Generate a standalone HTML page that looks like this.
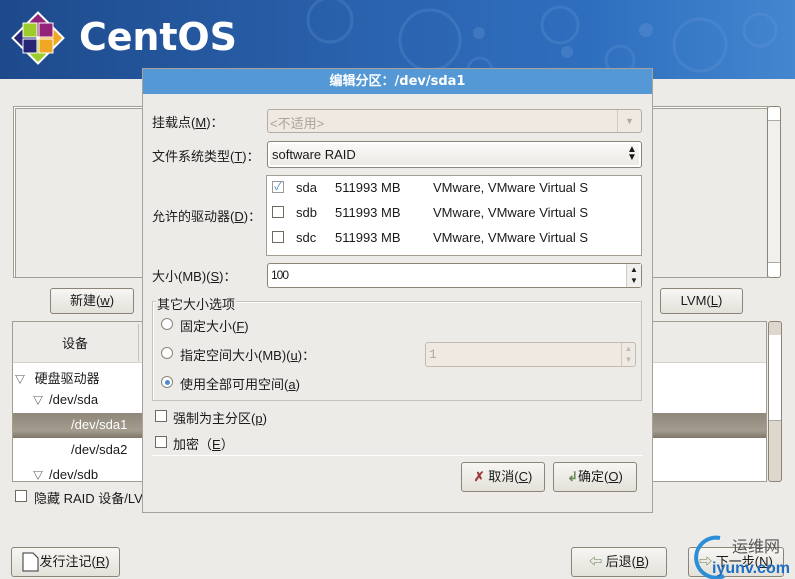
<!DOCTYPE html>
<html><head><meta charset="utf-8">
<style>
*{box-sizing:border-box;margin:0;padding:0}
body{width:795px;height:579px;overflow:hidden;background:#edebe7;font-family:"Liberation Sans","WenQuanYi Zen Hei","Noto Sans CJK SC",sans-serif;font-size:13px;color:#1a1a1a;position:relative}
.a{position:absolute}
.btn{position:absolute;border:1px solid #8c8477;border-radius:3px;background:linear-gradient(#f7f6f3,#e4e1da);text-align:center;font-size:13px}
.cb{position:absolute;width:12px;height:12px;border:1px solid #6f6a62;background:#fff}
.rd{position:absolute;width:12px;height:12px;border:1px solid #8a857c;border-radius:50%;background:#fff}
.lbl{position:absolute;white-space:nowrap}
.tri{font-size:10px;display:inline-block;width:16px}
</style></head><body>
<div class="a" style="left:0;top:0;width:795px;height:79px;background:linear-gradient(90deg,#1e4a8c 0%,#2a62ad 45%,#2f6fbf 75%,#4486cf 100%)"></div>
<svg class="a" style="left:0;top:0" width="795" height="79">
<g fill="none" stroke="#6d9bd6" stroke-opacity=".25" stroke-width="3">
<circle cx="330" cy="20" r="22"/><circle cx="430" cy="40" r="30"/><circle cx="560" cy="25" r="18"/><circle cx="700" cy="45" r="26"/><circle cx="760" cy="30" r="16"/><circle cx="620" cy="60" r="14"/><circle cx="480" cy="70" r="12"/></g>
<g fill="#6d9bd6" fill-opacity=".3"><circle cx="479" cy="33" r="6"/><circle cx="646" cy="30" r="7"/><circle cx="567" cy="52" r="6"/></g>
<g transform="translate(38,38) rotate(45)">
<rect x="-19" y="-19" width="38" height="38" fill="#fff"/>
<rect x="-17" y="-17" width="16" height="16" fill="#932279"/>
<rect x="1" y="-17" width="16" height="16" fill="#efa724"/>
<rect x="-17" y="1" width="16" height="16" fill="#262577"/>
<rect x="1" y="1" width="16" height="16" fill="#9ccd2a"/>
</g>
<g transform="translate(38,38)">
<rect x="-15" y="-15" width="14" height="14" fill="#9ccd2a" stroke="#fff"/>
<rect x="1" y="-15" width="14" height="14" fill="#932279" stroke="#fff"/>
<rect x="-15" y="1" width="14" height="14" fill="#262577" stroke="#fff"/>
<rect x="1" y="1" width="14" height="14" fill="#efa724" stroke="#fff"/>
</g>
<text x="79" y="50" fill="#fff" font-family="DejaVu Sans" font-weight="bold" font-size="38" textLength="158">CentOS</text>
</svg>
<div class="a" style="left:13px;top:106px;width:755px;height:172px;border:1px solid #a39d92;box-shadow:inset 1px 1px 0 #fff, inset 2px 2px 0 #a39d92"></div>
<div class="a" style="left:767px;top:106px;width:14px;height:172px;border:1px solid #8c8477;border-radius:3px;background:#fff"></div>
<div class="a" style="left:768px;top:120px;width:12px;height:143px;background:#f2f0ec;border-top:1px solid #aaa;border-bottom:1px solid #aaa"></div>
<div class="btn" style="left:50px;top:288px;width:84px;height:26px;line-height:24px">新建(<u>w</u>)</div>
<div class="btn" style="left:660px;top:288px;width:83px;height:26px;line-height:24px">LVM(<u>L</u>)</div>
<div class="a" style="left:12px;top:321px;width:755px;height:161px;border:1px solid #a39d92;background:#fff"></div>
<div class="a" style="left:13px;top:322px;width:753px;height:41px;background:#edebe7;border-bottom:1px solid #d6d2ca"></div>
<div class="a" style="left:138px;top:324px;width:1px;height:37px;background:#c8c3ba"></div>
<div class="lbl" style="left:62px;top:333px">设备</div>
<div class="a" style="left:13px;top:413px;width:753px;height:25px;background:linear-gradient(#8f8779,#a39c8f 70%,#7f7869)"></div>
<div class="lbl" style="left:15px;top:368px"><span class="tri">▽</span> 硬盘驱动器</div>
<div class="lbl" style="left:33px;top:392px"><span class="tri">▽</span>/dev/sda</div>
<div class="lbl" style="left:71px;top:417px;color:#fff">/dev/sda1</div>
<div class="lbl" style="left:71px;top:442px">/dev/sda2</div>
<div class="lbl" style="left:33px;top:467px"><span class="tri">▽</span>/dev/sdb</div>
<div class="a" style="left:768px;top:321px;width:14px;height:161px;border:1px solid #8c8477;border-radius:3px;background:#ddd7cd"></div>
<div class="a" style="left:769px;top:335px;width:12px;height:86px;background:#fff;border-bottom:1px solid #aaa"></div>
<div class="cb" style="left:15px;top:490px"></div>
<div class="lbl" style="left:34px;top:488px">隐藏 RAID 设备/LVM</div>
<div class="btn" style="left:11px;top:547px;width:109px;height:30px;line-height:28px">&nbsp;&nbsp;&nbsp;&nbsp;&nbsp;发行注记(<u>R</u>)</div>
<svg class="a" style="left:22px;top:552px" width="18" height="20"><path d="M1 1h10l5 5v13H1z" fill="#fff" stroke="#333"/></svg>
<div class="btn" style="left:571px;top:547px;width:96px;height:30px;line-height:28px"><span style="color:#5d7a4a">⇦</span> 后退(<u>B</u>)</div>
<div class="btn" style="left:688px;top:547px;width:96px;height:30px;line-height:28px"><span style="color:#5d7a4a">⇨</span> 下一步(<u>N</u>)</div>
<svg class="a" style="left:690px;top:530px" width="105" height="49"><path d="M30 8a20 20 0 1 0 4 38" fill="none" stroke="#2c8fd6" stroke-width="4"/><text x="42" y="22" fill="#555" font-size="16" font-family="WenQuanYi Zen Hei">运维网</text><text x="22" y="43" fill="#1e6fc0" font-size="16" font-weight="bold">iyunv.com</text></svg>
<div class="a" style="left:142px;top:68px;width:511px;height:445px;background:#edebe7;border:1px solid #a8a29a"></div>
<div class="a" style="left:143px;top:69px;width:509px;height:25px;background:#5498d5;color:#fff;font-weight:bold;text-align:center;line-height:25px;font-family:'DejaVu Sans','WenQuanYi Zen Hei',sans-serif;font-size:13px">编辑分区：/dev/sda1</div>
<div class="lbl" style="left:152px;top:112px">挂载点(<u>M</u>)：</div>
<div class="a" style="left:267px;top:109px;width:375px;height:24px;border:1px solid #b2aca2;border-radius:3px;background:#efe9e2;color:#aaa39a;padding:3px 2px">&lt;不适用&gt;</div>
<div class="a" style="left:617px;top:110px;width:24px;height:22px;border-left:1px solid #d0cac1;color:#aaa;font-size:9px;text-align:center;line-height:22px">▼</div>
<div class="lbl" style="left:152px;top:146px">文件系统类型(<u>T</u>)：</div>
<div class="a" style="left:267px;top:141px;width:375px;height:27px;border:1px solid #8c8477;border-radius:3px;background:linear-gradient(#fbfaf8,#ece9e3);padding:5px 4px;box-shadow:inset 0 0 0 2px #fff">software RAID</div>
<div class="lbl" style="left:627px;top:146px;font-size:10px;line-height:8px">▲<br>▼</div>
<div class="lbl" style="left:152px;top:206px">允许的驱动器(<u>D</u>)：</div>
<div class="a" style="left:266px;top:175px;width:376px;height:81px;border:1px solid #a39d92;background:#fff"></div>
<div class="cb" style="left:272px;top:181px;border-color:#999;color:#5a8fc4;font-size:11px;line-height:10px;text-align:center">✓</div>
<div class="cb" style="left:272px;top:206px"></div>
<div class="cb" style="left:272px;top:231px"></div>
<div class="lbl" style="left:296px;top:180px">sda</div><div class="lbl" style="left:335px;top:180px">511993 MB</div><div class="lbl" style="left:433px;top:180px">VMware, VMware Virtual S</div>
<div class="lbl" style="left:296px;top:205px">sdb</div><div class="lbl" style="left:335px;top:205px">511993 MB</div><div class="lbl" style="left:433px;top:205px">VMware, VMware Virtual S</div>
<div class="lbl" style="left:296px;top:230px">sdc</div><div class="lbl" style="left:335px;top:230px">511993 MB</div><div class="lbl" style="left:433px;top:230px">VMware, VMware Virtual S</div>
<div class="lbl" style="left:152px;top:266px">大小(MB)(<u>S</u>)：</div>
<div class="a" style="left:267px;top:263px;width:375px;height:25px;border:1px solid #8c8477;border-radius:3px;background:#fff;padding:4px 3px;font-size:12px;letter-spacing:-1px">100</div>
<div class="a" style="left:626px;top:264px;width:15px;height:23px;border-left:1px solid #ccc;background:#f2f0ec;font-size:8px;text-align:center;line-height:11px">▲<br>▼</div>
<div class="a" style="left:152px;top:301px;width:490px;height:100px;border:1px solid #c8c3ba;box-shadow:1px 1px 0 #fff inset"></div>
<div class="lbl" style="left:156px;top:294px;background:#edebe7;padding:0 1px">其它大小选项</div>
<div class="rd" style="left:161px;top:318px"></div><div class="lbl" style="left:180px;top:316px">固定大小(<u>F</u>)</div>
<div class="rd" style="left:161px;top:347px"></div><div class="lbl" style="left:180px;top:345px">指定空间大小(MB)(<u>u</u>)：</div>
<div class="rd" style="left:161px;top:376px"></div><div class="a" style="left:165px;top:380px;width:5px;height:5px;border-radius:50%;background:#4f8bc9"></div><div class="lbl" style="left:180px;top:374px">使用全部可用空间(<u>a</u>)</div>
<div class="a" style="left:425px;top:342px;width:211px;height:25px;border:1px solid #c2bbb1;border-radius:3px;background:#efe9e2;color:#aaa;padding:4px 3px;font-family:'Liberation Mono',monospace">1</div>
<div class="a" style="left:621px;top:343px;width:14px;height:23px;border-left:1px solid #d0cac1;font-size:8px;color:#bbb;text-align:center;line-height:11px">▲<br>▼</div>
<div class="cb" style="left:155px;top:410px"></div><div class="lbl" style="left:173px;top:408px">强制为主分区(<u>p</u>)</div>
<div class="cb" style="left:155px;top:436px"></div><div class="lbl" style="left:173px;top:434px">加密（<u>E</u>）</div>
<div class="a" style="left:152px;top:455px;width:491px;height:1px;background:#c8c3ba;border-bottom:1px solid #fff"></div>
<div class="btn" style="left:461px;top:462px;width:84px;height:30px;line-height:28px"><span style="color:#9c3a3a;font-weight:bold">✗</span> 取消(<u>C</u>)</div>
<div class="btn" style="left:553px;top:462px;width:84px;height:30px;line-height:28px"><span style="color:#6c8a55;font-weight:bold">↲</span>确定(<u>O</u>)</div>
</body></html>
